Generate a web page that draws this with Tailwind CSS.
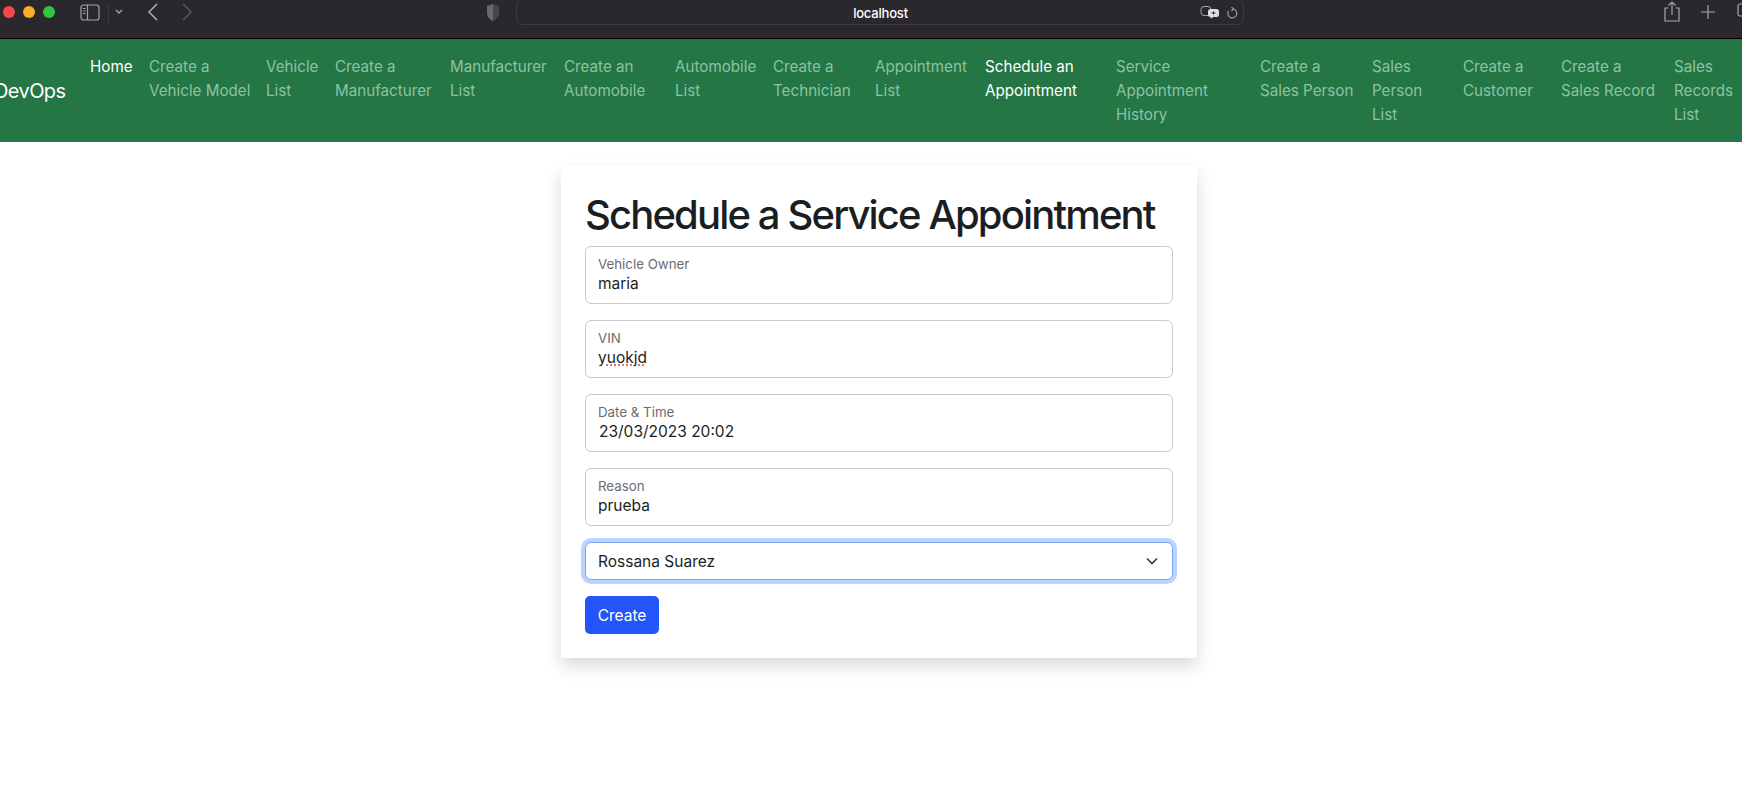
<!DOCTYPE html>
<html lang="en">
<head>
    <meta charset="UTF-8">
    <meta name="viewport" content="width=device-width, initial-scale=1.0">
    <title>Schedule a Service Appointment</title>
    <script src="https://cdn.jsdelivr.net/npm/@tailwindcss/browser@4"></script>
</head>
<body class="bg-white font-['Inter',sans-serif] min-h-screen overflow-hidden">
    <!-- Browser toolbar -->
    <div class="h-[39px] bg-[#2a282d] border-b border-black flex items-start text-[#a5a4a7] overflow-hidden">
        <div class="flex items-center gap-2 ml-[3px] mt-[6px] w-[64px] shrink-0">
            <span class="w-3 h-3 rounded-full bg-[#f6484c]"></span>
            <span class="w-3 h-3 rounded-full bg-[#f9ae24]"></span>
            <span class="w-3 h-3 rounded-full bg-[#2fc53f]"></span>
        </div>
        <svg class="w-[20px] h-[17px] ml-[13px] mt-[4px] shrink-0" viewBox="0 0 20 17" fill="none" stroke="currentColor" stroke-width="1.2">
            <rect x="1" y="1" width="18" height="15" rx="2.5"/>
            <path d="M7.5 1v15"/>
            <path d="M3 4.5h2.5M3 7h2.5M3 9.5h2.5"/>
        </svg>
        <span class="w-px h-[19px] bg-[#3d3b40] ml-[8px] mt-[3px] shrink-0"></span>
        <svg class="w-[8px] h-[6px] ml-[6px] mt-[9px] shrink-0" viewBox="0 0 8 6" fill="none" stroke="currentColor" stroke-width="1.4"><path d="M1 1l3 3 3-3"/></svg>
        <svg class="w-[11px] h-[18px] ml-[24px] mt-[3px] shrink-0" viewBox="0 0 11 18" fill="none" stroke="#b0afb2" stroke-width="1.5"><path d="M10 1L2 9l8 8"/></svg>
        <svg class="w-[11px] h-[18px] ml-[24px] mt-[3px] shrink-0" viewBox="0 0 11 18" fill="none" stroke="#59575c" stroke-width="1.5"><path d="M1 1l8 8-8 8"/></svg>
        <svg class="w-[14px] h-[19px] ml-[293px] mt-[3px] shrink-0" viewBox="0 0 14 19">
            <path d="M7 1L1 3v7c0 4 3 6.500 6 8z" fill="#69686c"/>
            <path d="M7 1l6 2v7c0 4-3 6.500-6 8z" fill="#47464a"/>
        </svg>
        <!-- Address field -->
        <div class="w-[728px] h-[26px] ml-[16px] -mt-px border border-[#3d3b40] rounded-md flex items-center relative shrink-0">
            <span class="w-full text-center text-[13px] font-medium text-white pt-[3px] pl-[1px] tracking-[-0.2px]">localhost</span>
            <svg class="absolute left-[683px] top-[6px] w-[20px] h-[13px]" viewBox="0 0 20 13">
                <rect x="1" y="0.500" width="10" height="9" rx="3" fill="none" stroke="#a5a4a7"/>
                <rect x="8" y="3" width="11" height="8" rx="2.500" fill="#dedede"/>
                <path d="M11.500 7h4M13.500 5.500v3" stroke="#2a282d"/>
                <path d="M10 11h3l-1.500 1.500z" fill="#dedede"/>
            </svg>
            <svg class="absolute left-[709px] top-[7px] w-[12px] h-[12px]" viewBox="0 0 12 12" fill="none" stroke="#a5a4a7" stroke-width="1.100">
                <path d="M7.500 2A4.500 4.500 0 1 1 2.500 4"/><path d="M5.500 0l2 2-2 2"/>
            </svg>
        </div>
        <svg class="w-[16px] h-[21px] ml-[420px] mt-px shrink-0" viewBox="0 0 16 21" fill="none" stroke="currentColor" stroke-width="1.200">
            <path d="M4.500 7H1v13h14V7h-3.500"/><path d="M8 14V1M4.500 4.500L8 1l3.500 3.500"/>
        </svg>
        <svg class="w-[14px] h-[14px] ml-[21px] mt-[5px] shrink-0" viewBox="0 0 14 14" stroke="currentColor" stroke-width="1.200"><path d="M7 0v14M0 7h14"/></svg>
        <svg class="w-[14px] h-[16px] ml-[22px] mt-[3px] shrink-0" viewBox="0 0 14 16" fill="none" stroke="currentColor" stroke-width="1.200"><rect x="1" y="1" width="12" height="12" rx="2"/></svg>
    </div>

    <!-- Navbar -->
    <nav class="h-[103px] bg-[#247644] flex items-center py-2 overflow-hidden">
        <a href="#" class="text-[20px] leading-[30px] text-white mr-[17px] -ml-[6px] w-[71px] shrink-0 tracking-[-0.6px]">DevOps</a>
        <ul class="flex items-start self-start text-[15.200px] leading-6 text-[#8bc3a3] whitespace-nowrap">
            <li class="w-[59px] p-2 text-white">Home</li>
            <li class="w-[117px] p-2">Create a<br>Vehicle Model</li>
            <li class="w-[69px] p-2">Vehicle<br>List</li>
            <li class="w-[115px] p-2">Create a<br>Manufacturer</li>
            <li class="w-[114px] p-2">Manufacturer<br>List</li>
            <li class="w-[111px] p-2">Create an<br>Automobile</li>
            <li class="w-[98px] p-2">Automobile<br>List</li>
            <li class="w-[102px] p-2">Create a<br>Technician</li>
            <li class="w-[110px] p-2">Appointment<br>List</li>
            <li class="w-[131px] p-2 text-white">Schedule an<br>Appointment</li>
            <li class="w-[144px] p-2">Service<br>Appointment<br>History</li>
            <li class="w-[112px] p-2">Create a<br>Sales Person</li>
            <li class="w-[91px] p-2">Sales<br>Person<br>List</li>
            <li class="w-[98px] p-2">Create a<br>Customer</li>
            <li class="w-[113px] p-2">Create a<br>Sales Record</li>
            <li class="w-[76px] p-2">Sales<br>Records<br>List</li>
        </ul>
    </nav>

    <!-- Form card -->
    <main class="w-[636px] mt-6 mx-auto p-6 bg-white shadow-[0_8px_16px_rgba(0,0,0,0.15)] relative left-[8px]">
        <h1 class="text-[40px] leading-[48px] h-[48px] pt-px font-[540] text-[#1b1e21] mb-2 whitespace-nowrap tracking-[-1.850px]">Schedule a Service Appointment</h1>
        <form>
            <div class="h-[58px] mb-4 px-3 pt-[9px] border border-[#c5cad3] rounded-md">
                <label class="block text-[13.300px] leading-4 text-[#6a6c6f]">Vehicle Owner</label>
                <input class="block w-full mt-px text-[15.500px] leading-[21px] text-[#1b1e21] outline-none" value="maria">
            </div>
            <div class="h-[58px] mb-4 px-3 pt-[9px] border border-[#c5cad3] rounded-md">
                <label class="block text-[13.300px] leading-4 text-[#6a6c6f]">VIN</label>
                <input class="block w-full mt-px text-[15.500px] leading-[21px] text-[#1b1e21] outline-none underline underline-offset-2 decoration-dotted decoration-[#e5484d]" value="yuokjd">
            </div>
            <div class="h-[58px] mb-4 px-3 pt-[9px] border border-[#c5cad3] rounded-md">
                <label class="block text-[13.300px] leading-4 text-[#6a6c6f]">Date &amp; Time</label>
                <input class="block w-full mt-px pl-px text-[15.500px] leading-[21px] text-[#1b1e21] outline-none" value="23/03/2023 20:02">
            </div>
            <div class="h-[58px] mb-4 px-3 pt-[9px] border border-[#c5cad3] rounded-md">
                <label class="block text-[13.300px] leading-4 text-[#6a6c6f]">Reason</label>
                <input class="block w-full mt-px text-[15.500px] leading-[21px] text-[#1b1e21] outline-none" value="prueba">
            </div>
            <div class="relative mb-4">
                <select class="block w-full h-[38px] px-3 pt-px appearance-none bg-white text-[15.500px] text-[#1b1e21] border border-[#7ca6f5] rounded-md shadow-[0_0_0_4px_#bcd3fd] outline-none">
                    <option>Rossana Suarez</option>
                </select>
                <svg class="absolute right-[15px] top-[14px] w-[12px] h-[10px] pointer-events-none" viewBox="0 0 12 10" fill="none" stroke="#343a40" stroke-width="1.600"><path d="M1 2.500l5 5 5-5"/></svg>
            </div>
            <button type="button" class="w-[74px] h-[38px] pt-px bg-[#2355fb] text-white text-[15.500px] rounded-[5px]">Create</button>
        </form>
    </main>
</body>
</html>
